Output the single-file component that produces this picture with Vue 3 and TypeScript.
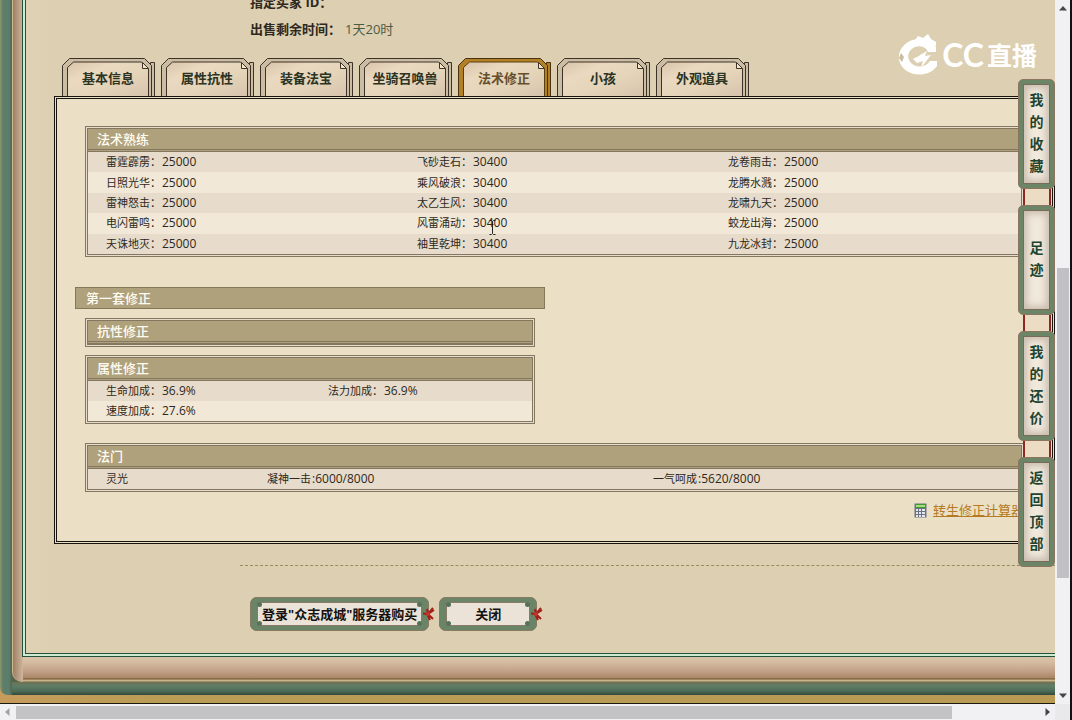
<script setup lang="ts">
import { ref } from 'vue'

interface Entry {
  name: string
  value: string
}

const tabs: string[] = ['基本信息', '属性抗性', '装备法宝', '坐骑召唤兽', '法术修正', '小孩', '外观道具']
const activeTab = ref<number>(4)

const skillRows: Entry[][] = [
  [
    { name: '雷霆霹雳', value: '25000' },
    { name: '飞砂走石', value: '30400' },
    { name: '龙卷雨击', value: '25000' },
  ],
  [
    { name: '日照光华', value: '25000' },
    { name: '乘风破浪', value: '30400' },
    { name: '龙腾水溅', value: '25000' },
  ],
  [
    { name: '雷神怒击', value: '25000' },
    { name: '太乙生风', value: '30400' },
    { name: '龙啸九天', value: '25000' },
  ],
  [
    { name: '电闪雷鸣', value: '25000' },
    { name: '风雷涌动', value: '30400' },
    { name: '蛟龙出海', value: '25000' },
  ],
  [
    { name: '天诛地灭', value: '25000' },
    { name: '袖里乾坤', value: '30400' },
    { name: '九龙冰封', value: '25000' },
  ],
]

const bonusRows: (Entry | null)[][] = [
  [
    { name: '生命加成', value: '36.9%' },
    { name: '法力加成', value: '36.9%' },
  ],
  [{ name: '速度加成', value: '27.6%' }, null],
]

const methods: Entry[] = [
  { name: '凝神一击', value: '6000/8000' },
  { name: '一气呵成', value: '5620/8000' },
]

const shortcuts: string[] = ['我的收藏', '足迹', '我的还价', '返回顶部']
const actions: string[] = ['登录"众志成城"服务器购买', '关闭']
</script>

<template>
  <div class="screen">
    <div class="viewport">
      <div class="frame-gold">
        <div class="frame-green">
          <div class="frame-tan">
            <main class="sheet">
              <dl class="summary">
                <div><dt>指定买家 ID：</dt><dd></dd></div>
                <div><dt>出售剩余时间：</dt><dd>1天20时</dd></div>
              </dl>

              <nav class="tabs">
                <button
                  v-for="(tab, i) in tabs"
                  :key="tab"
                  type="button"
                  class="tab"
                  :class="{ active: i === activeTab }"
                  @click="activeTab = i"
                >
                  <svg class="tab-shape" viewBox="0 0 94 38" aria-hidden="true">
                    <defs>
                      <linearGradient :id="'paper' + i" x1="0" y1="0" x2="1" y2="1">
                        <stop offset="0" stop-color="#d9c4aa" />
                        <stop offset=".3" stop-color="#ead9c0" />
                        <stop offset=".6" stop-color="#e4d4b8" />
                        <stop offset="1" stop-color="#d8c3ae" />
                      </linearGradient>
                    </defs>
                    <path class="rim" d="M88.500 38V4.500H92.500V38" />
                    <path class="rim" d="M.5 38V7.500L7.500 .5H82.500L89.500 7.500V38" />
                    <path class="face" :fill="`url(#paper${i})`" d="M5.500 38V9.500L11.500 4H79.500L86.500 11V38" />
                    <path class="fold" d="M80.500 4.500V10.500H86.500Z" />
                  </svg>
                  <span>{{ tab }}</span>
                </button>
              </nav>

              <section class="panel">
                <section class="box">
                  <h2>法术熟练</h2>
                  <table class="skills">
                    <tbody>
                      <tr v-for="(row, i) in skillRows" :key="i">
                        <td v-for="cell in row" :key="cell.name">
                          {{ cell.name }}：<b>{{ cell.value }}</b>
                        </td>
                      </tr>
                    </tbody>
                  </table>
                </section>

                <section class="group">
                  <h2 class="group-title">第一套修正</h2>
                  <section class="box empty">
                    <h2>抗性修正</h2>
                  </section>
                  <section class="box">
                    <h2>属性修正</h2>
                    <table>
                      <tbody>
                        <tr v-for="(row, i) in bonusRows" :key="i">
                          <td v-for="(cell, j) in row" :key="j">
                            <template v-if="cell">{{ cell.name }}：<b>{{ cell.value }}</b></template>
                          </td>
                        </tr>
                      </tbody>
                    </table>
                  </section>
                </section>

                <section class="box">
                  <h2>法门</h2>
                  <table class="methods">
                    <tbody>
                      <tr>
                        <td>灵光</td>
                        <td v-for="m in methods" :key="m.name" class="flush">
                          {{ m.name }}<b>:{{ m.value }}</b>
                        </td>
                      </tr>
                    </tbody>
                  </table>
                </section>

                <p class="calc">
                  <svg viewBox="0 0 13 15" aria-hidden="true">
                    <path d="M.5 .5H12.500V14.500H.5Z" fill="#6d7280" />
                    <path d="M1 1H12V5H1Z" fill="#3f9a35" />
                    <path d="M2 2H11V4H2Z" fill="#a5dc83" />
                    <path d="M2 6H4V8H2ZM5 6H7V8H5ZM8 6H11V8H8ZM2 9H4V11H2ZM5 9H7V11H5ZM8 9H11V11H8ZM2 12H4V14H2ZM5 12H7V14H5ZM8 12H11V14H8Z" fill="#e4e6ef" />
                  </svg>
                  <a href="#calc">转生修正计算器</a>
                </p>
              </section>

              <footer class="actions">
                <button v-for="label in actions" :key="label" type="button" class="plaque">
                  <i class="stud"></i><i class="stud right"></i>
                  <i class="stud low"></i><i class="stud right low"></i>
                  <span>{{ label }}</span>
                  <svg class="knot" viewBox="0 0 12 14" aria-hidden="true">
                    <path d="M0 6.500L5 7L10 1M5 7L11 3M5 7L10 12M4 7L7 13M5 7L4 2" fill="none" stroke="#a51f17" stroke-width="2" />
                    <circle cx="5" cy="7" r="2" fill="#c4342a" />
                  </svg>
                </button>
              </footer>
            </main>
          </div>
        </div>
      </div>

      <div class="brand">
        <svg viewBox="0 0 42 42" aria-hidden="true">
          <path d="M39 13C34 5 23 3 13 7C3 12 0 21 3 29C7 38 17 42 27 40C33 39 37 36 40 32V27H33C28 34 19 34 14 29C9 23 11 16 18 13C24 11 29 13 31 18H39Z" fill="#fff" />
          <path d="M18 6L21 2L26 4L31 0L34 5L39 8V12L30 8L20 8Z" fill="#fff" />
          <path d="M16 25C19 23 21 23 23 21L30 17L28 22L34 21L24 34L26 27L20 29Z" fill="#fff" />
          <path d="M4 19L7 23L5 28L2 24Z" fill="#cbbda2" />
        </svg>
        <span class="latin">CC</span><span class="han">直播</span>
      </div>

      <aside class="shortcuts">
        <template v-for="(item, i) in shortcuts" :key="item">
          <div v-if="i > 0" class="cord"></div>
          <button type="button" class="plate"><span>{{ item }}</span></button>
        </template>
      </aside>

      <svg class="caret" viewBox="0 0 7 15" aria-hidden="true">
        <path d="M.5 .5H2.500L3.500 1.500L4.500 .5H6.500M3.500 1.500V13.500M.5 14.500H2.500L3.500 13.500L4.500 14.500H6.500" fill="none" stroke="#222" />
      </svg>
    </div>

    <div class="bar vertical" aria-hidden="true">
      <svg viewBox="0 0 8 5"><path d="M0 4.500L4 0L8 4.500Z" fill="#45454b" /></svg>
      <div class="track"><div class="thumb"></div></div>
      <svg viewBox="0 0 8 5"><path d="M0 .5L4 5L8 .5Z" fill="#45454b" /></svg>
    </div>
    <div class="bar horizontal" aria-hidden="true">
      <svg viewBox="0 0 5 8"><path d="M4.500 0L0 4L4.500 8Z" fill="#a2a2a6" /></svg>
      <div class="track"><div class="thumb"></div></div>
      <svg viewBox="0 0 5 8"><path d="M.5 0L5 4L.5 8Z" fill="#45454b" /></svg>
    </div>
    <div class="corner"></div>
  </div>
</template>

<style>
body {
  margin: 0;
  background: #f0f0f1;
}
</style>

<style scoped>
* {
  box-sizing: border-box;
}
h2,
p,
dl,
dd {
  margin: 0;
}
button {
  padding: 0;
  border: 0;
  background: none;
  font: inherit;
  cursor: pointer;
}

.screen {
  display: grid;
  grid-template-columns: minmax(0, 1fr) 15px;
  grid-template-rows: minmax(0, 1fr) 16px;
  height: 100vh;
  border-right: 2px solid #111;
  font-family: "Open Sans", "Noto Sans CJK SC", sans-serif;
  font-size: 13px;
  color: #2e2820;
}
.viewport {
  position: relative;
  display: flex;
  overflow: hidden;
}

/* Ornamental frame */
.frame-gold {
  flex: 1;
  display: flex;
  min-width: 0;
  padding-bottom: 8px;
  border-bottom: 1px solid #1c1a10;
  background: linear-gradient(to right, #c69b5c, #b99d55 160px, #b89a55);
}
.frame-green {
  flex: 1;
  display: flex;
  min-width: 0;
  padding: 0 0 13px 12px;
  border-bottom-left-radius: 8px;
  background:
    linear-gradient(to top, #34483c, #4d6c57 4px, #5f7d66 9px, #6f7152 13px, transparent 13px) 12px 0 no-repeat,
    linear-gradient(to right, #8c9b70, #6c8266 2px, #5c7e6b 4px, #5b7d6c 9px, #54644b 12px);
}
.frame-tan {
  flex: 1;
  display: flex;
  min-width: 0;
  padding: 0 0 25px 9px;
  border-left: 1px solid #cdb98c;
  border-bottom-left-radius: 10px;
  background:
    linear-gradient(to top, #7a6a45, #c9b389 1px, #cbb58c 2px, #70542f 3px, #a98667 4px, #c2a187 11px, #d6bda2 20px, #d9c3a8 25px, transparent 25px) 10px 0 no-repeat,
    linear-gradient(to right, #9c7f62, #ac9077 3px, #c5ab90 8px, #cdb79f 10px);
}
.sheet {
  flex: 1;
  display: flex;
  flex-direction: column;
  min-width: 0;
  padding-left: 31px;
  border: solid #24513c;
  border-width: 0 0 1px 1px;
  box-shadow:
    inset 2px -2px 0 #cdebcf,
    inset 3px -3px 0 #24513c;
  background: linear-gradient(to right, #e0d2b5, #dccfb2 30px, #dccfb2);
}

.summary {
  margin: -11px 0 15px 196px;
  line-height: 27px;
}
.summary div {
  display: flex;
  gap: 4px;
}
.summary dt {
  font-weight: bold;
}
.summary dd {
  color: #4b5a42;
}

/* Tabs */
.tabs {
  display: flex;
  gap: 5px;
  padding-left: 8px;
}
.tab {
  position: relative;
  width: 94px;
  height: 38px;
  padding: 2px 2px 0 0;
  font-weight: bold;
  line-height: 36px;
  color: #2b3324;
}
.tab-shape {
  position: absolute;
  inset: 0;
  width: 94px;
  height: 38px;
}
.tab span {
  position: relative;
}
.rim {
  fill: #cbbda3;
  stroke: #3d3227;
}
.face {
  stroke: #3d3227;
}
.fold {
  fill: #f2e8c8;
  stroke: #3d3227;
}
.tab.active {
  color: #66502c;
}
.tab.active .rim {
  fill: #b28126;
  stroke: #4a3210;
}
.tab.active .face {
  stroke: #5a3e12;
}

/* Main panel */
.panel {
  padding: 27px 18px 21px;
  border: 3px double #17120c;
  background: #ebe0c6;
}
.box {
  margin: 0 10px;
  border: 3px double #83775f;
  background: #e7dccb;
}
.box h2,
.group-title {
  background: #b0a17d;
  color: #fffdf2;
  font-size: 13px;
  font-weight: 500;
  line-height: 20px;
}
.box h2 {
  padding-left: 9px;
  border-bottom: 3px double #83775f;
}
.box.empty {
  margin-bottom: 8px;
}
.group {
  width: 49%;
  margin: 30px 0 19px;
}
.group-title {
  margin-bottom: 9px;
  padding-left: 10px;
  border: 1px solid #857758;
}
table {
  width: 100%;
  table-layout: fixed;
  border-collapse: collapse;
}
.skills {
  height: 102px;
}
tr:nth-child(even) {
  background: #f1e8d8;
}
td {
  padding: 0 0 0 18px;
  font-size: 11px;
  line-height: 20px;
  white-space: nowrap;
}
td b {
  padding-left: 1px;
  font-size: 12px;
  font-weight: normal;
}
.methods td:first-child {
  width: 179px;
}
.methods td:last-child {
  width: 368px;
}
.flush {
  padding-left: 0;
}
.calc {
  display: flex;
  align-items: center;
  justify-content: flex-end;
  gap: 6px;
  margin: 8px 10px 0;
  line-height: 20px;
}
.calc svg {
  width: 13px;
  height: 15px;
}
.calc a {
  color: #b57a24;
}

/* Bottom buttons */
.actions {
  display: flex;
  gap: 10px;
  margin: 21px 0 0 186px;
  padding: 31px 0 0 10px;
  border-top: 1px dashed #9b8c5b;
}
.plaque {
  position: relative;
  min-width: 98px;
  height: 34px;
  padding: 0 9px;
  border: 5px solid #6a8468;
  border-left-width: 7px;
  border-right-width: 7px;
  border-radius: 7px;
  outline: 1px solid #8a7a5e;
  outline-offset: -1px;
  background: #ece3d8;
  box-shadow: inset 0 0 0 1px #8a7a68;
  font-weight: bold;
  line-height: 24px;
  color: #15120f;
  white-space: nowrap;
}
.plaque span {
  position: relative;
  display: block;
  margin: 0 -4px;
}
.stud {
  position: absolute;
  top: 0;
  left: 0;
  width: 5px;
  height: 5px;
  border-radius: 50%;
  background: #577258;
}
.stud.right {
  left: auto;
  right: 0;
}
.stud.low {
  top: auto;
  bottom: 0;
}
.knot {
  position: absolute;
  top: 5px;
  right: -13px;
  width: 12px;
  height: 14px;
}

/* Watermark */
.brand {
  position: absolute;
  top: 34px;
  right: 18px;
  display: flex;
  align-items: center;
  gap: 3px;
  color: #fff;
  line-height: 42px;
}
.brand svg {
  width: 42px;
  height: 42px;
}
.latin {
  font-family: Lato, "Open Sans", sans-serif;
  font-size: 32px;
  font-weight: bold;
}
.han {
  font-size: 25px;
  font-weight: bold;
}

/* Floating shortcuts */
.shortcuts {
  position: absolute;
  top: 79px;
  right: 0;
  display: flex;
  flex-direction: column;
  width: 37px;
}
.plate {
  display: flex;
  align-items: center;
  justify-content: center;
  height: 110px;
  padding-bottom: 3px;
  border: 1px solid #8b7460;
  border-radius: 5px;
  background: #f0e9dc;
  box-shadow:
    inset 0 0 0 4px #6c8567,
    inset 0 0 0 5px #7a6a58,
    inset 0 0 7px 8px #c9bcae;
  color: #1d4430;
  font-size: 14px;
  font-weight: bold;
  line-height: 22px;
}
.plate span {
  width: 14px;
  word-break: break-all;
}
.cord {
  height: 16px;
  margin: 0 4px 0 5px;
  border: solid #8c2a22;
  border-width: 0 2px;
  background: #ecdcc4;
}
.caret {
  position: absolute;
  top: 220px;
  left: 489px;
  width: 7px;
  height: 15px;
}

/* Scroll bars */
.bar {
  display: flex;
  align-items: center;
  background: #f1f1f3;
}
.vertical {
  flex-direction: column;
  padding: 6px 0;
}
.vertical svg {
  width: 8px;
  height: 5px;
}
.horizontal svg {
  width: 5px;
  height: 8px;
}
.horizontal {
  padding: 0 5px;
}
.track {
  flex: 1;
  display: flex;
  align-items: center;
}
.vertical .track {
  flex-direction: column;
  padding-top: 257px;
}
.vertical .thumb {
  width: 12px;
  height: 73%;
  background: #c1c1c5;
}
.horizontal .track {
  padding-left: 6px;
}
.horizontal .thumb {
  width: 91%;
  height: 13px;
  background: #c3c3c5;
}
.corner {
  background: #e9e9eb;
}
</style>
